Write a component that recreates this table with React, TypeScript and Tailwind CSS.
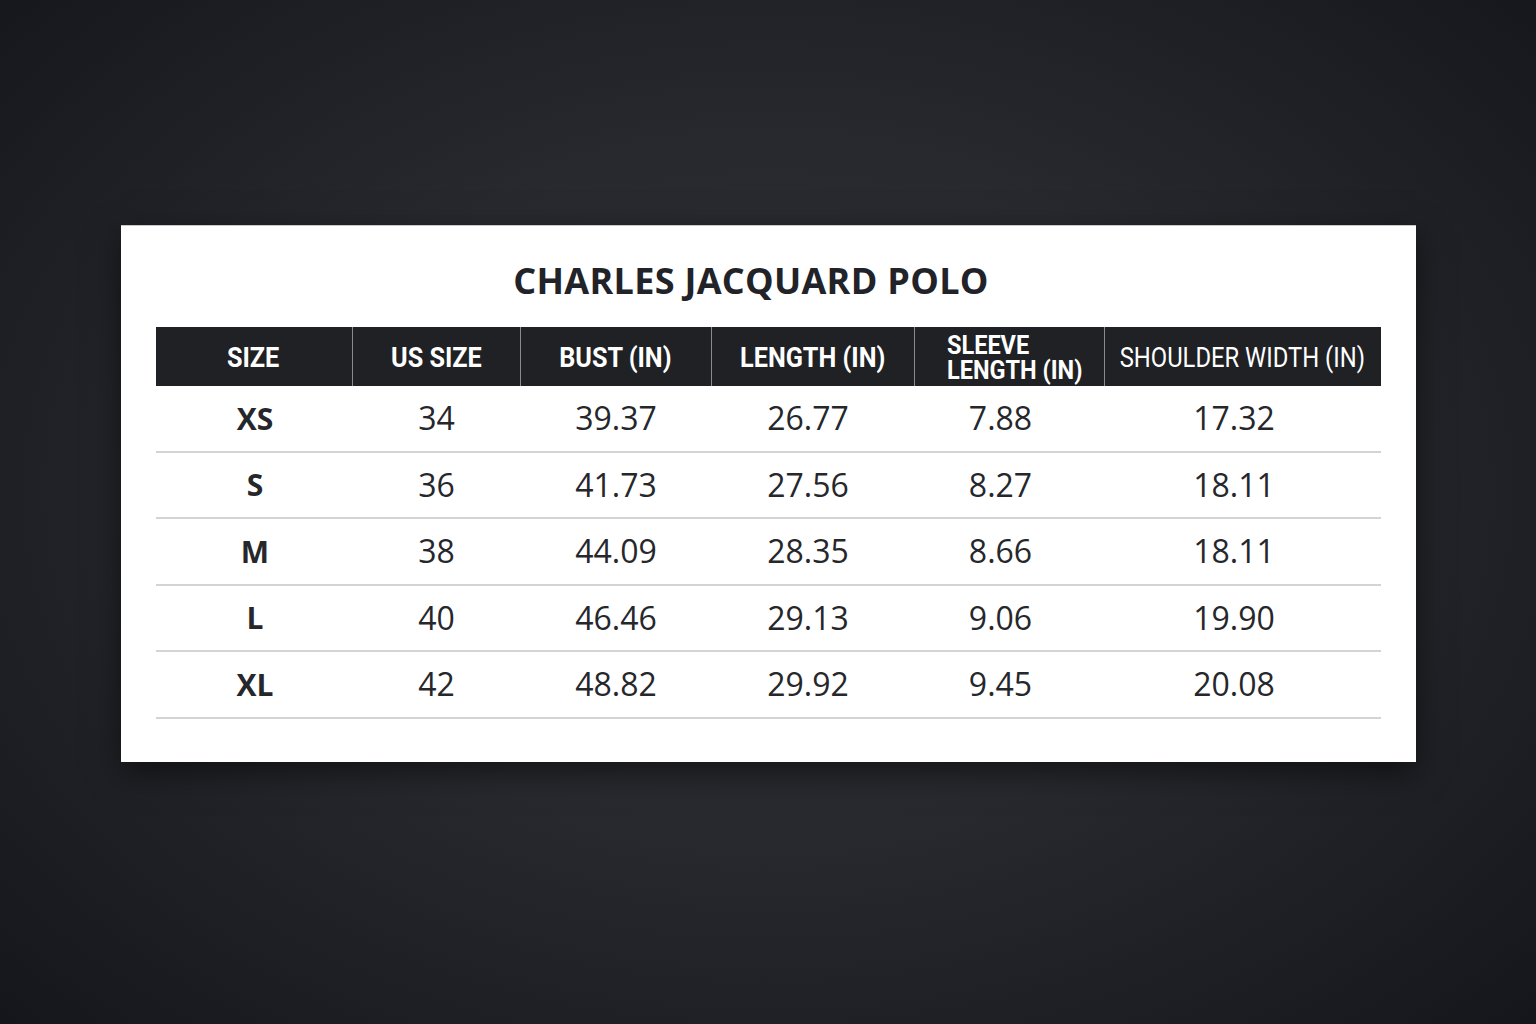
import React from 'react';

interface Row {
  size: string;
  us: string;
  bust: string;
  length: string;
  sleeve: string;
  shoulder: string;
}

const rows: Row[] = [
  { size: 'XS', us: '34', bust: '39.37', length: '26.77', sleeve: '7.88', shoulder: '17.32' },
  { size: 'S', us: '36', bust: '41.73', length: '27.56', sleeve: '8.27', shoulder: '18.11' },
  { size: 'M', us: '38', bust: '44.09', length: '28.35', sleeve: '8.66', shoulder: '18.11' },
  { size: 'L', us: '40', bust: '46.46', length: '29.13', sleeve: '9.06', shoulder: '19.90' },
  { size: 'XL', us: '42', bust: '48.82', length: '29.92', sleeve: '9.45', shoulder: '20.08' },
];

const cols = 'grid grid-cols-[196px_168px_191px_203px_190px_277px]';
const headFont = "font-['Roboto','Liberation_Sans',sans-serif]";
const bodyFont = "font-['Open_Sans','Noto_Sans',sans-serif]";

// header label, squeezed horizontally to get the condensed look
const Head: React.FC<{ children: React.ReactNode; className?: string }> = ({ children, className = 'scale-x-[0.9]' }) => (
  <span className={`inline-block whitespace-nowrap ${className}`}>{children}</span>
);

const App: React.FC = () => {
  return (
    <div className="w-[1536px] h-[1024px] bg-[radial-gradient(ellipse_70%_75%_at_50%_48%,#2e2f34_0%,#28292e_45%,#1c1d22_80%,#15161b_100%)] flex justify-center pt-[225px]">
      <div className="w-[1295px] h-[537px] bg-white border-t border-[#c9c9cc] flex flex-col items-center shadow-[0_10px_30px_rgba(0,0,0,0.5)]">
        <h1 className={`${bodyFont} mt-[30px] mr-[34px] h-[50px] leading-[50px] text-[36px] font-bold text-[#222328] tracking-[0.3px]`}>
          CHARLES JACQUARD POLO
        </h1>
        <div className="mt-[21px] w-[1225px]">
          <div className={`${cols} h-[59px] bg-[#202125] text-white ${headFont}`}>
            <div className="flex items-center justify-center text-[28px] font-bold pt-[2px]"><Head>SIZE</Head></div>
            <div className="flex items-center justify-center text-[28px] font-bold pt-[2px] border-l border-[#8a8b8f]"><Head>US SIZE</Head></div>
            <div className="flex items-center justify-center text-[28px] font-bold pt-[2px] border-l border-[#8a8b8f]"><Head>BUST (IN)</Head></div>
            <div className="flex items-center justify-center text-[28px] font-bold pt-[2px] border-l border-[#8a8b8f]"><Head>LENGTH (IN)</Head></div>
            <div className="flex items-center border-l border-[#8a8b8f] pl-[32px] pt-[2px]">
              <span className="inline-block w-[150px] text-left text-[25px] font-bold leading-[25px] origin-left scale-x-[0.94]">
                SLEEVE LENGTH (IN)
              </span>
            </div>
            <div className="flex items-center justify-center text-[28px] font-normal pt-[2px] border-l border-[#8a8b8f]"><Head className="scale-x-[0.85]">SHOULDER WIDTH (IN)</Head></div>
          </div>
          {rows.map((r) => (
            <div key={r.size} className={`${cols} h-[66.5px] border-b-2 border-[#d4d4d6] ${bodyFont} text-[32px] text-[#26272b]`}>
              <div className="flex items-center justify-center font-bold text-[30px] pl-[3px]">{r.size}</div>
              <div className="flex items-center justify-center pl-[2px]">{r.us}</div>
              <div className="flex items-center justify-center pl-[2px]">{r.bust}</div>
              <div className="flex items-center justify-center pr-[8px]">{r.length}</div>
              <div className="flex items-center justify-center pr-[16px]">{r.sleeve}</div>
              <div className="flex items-center justify-center pr-[16px]">{r.shoulder}</div>
            </div>
          ))}
        </div>
      </div>
    </div>
  );
};

export default App;
